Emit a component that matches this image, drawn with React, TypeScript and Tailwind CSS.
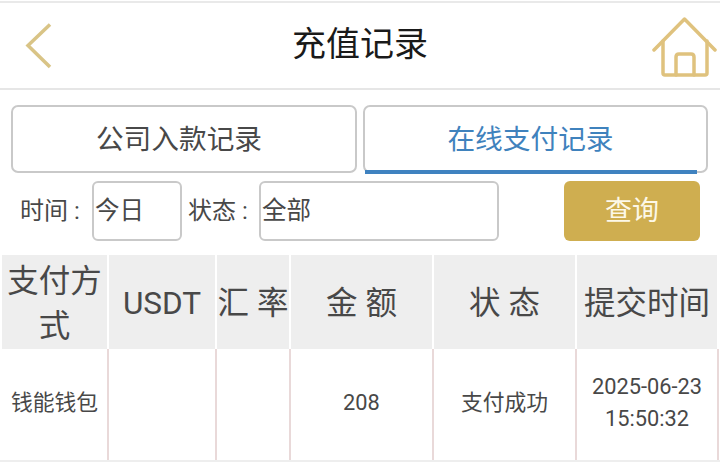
import React from "react";

const font = { fontFamily: '"Roboto", "Noto Sans CJK SC", sans-serif' };

const columns = [
  { title: "支付方式", cell: "钱能钱包" },
  { title: "USDT", cell: "" },
  { title: "汇 率", cell: "" },
  { title: "金 额", cell: "208" },
  { title: "状 态", cell: "支付成功" },
  { title: "提交时间", cell: "2025-06-23 15:50:32" },
];

function BackIcon() {
  return (
    <svg width="30" height="50" viewBox="0 0 30 50" fill="none" stroke="#d9c486" strokeWidth="3.500">
      <path d="M26 3.500 L4 24.500 L26 46" />
    </svg>
  );
}

function HomeIcon() {
  return (
    <svg className="mt-[3px]" width="66" height="60" viewBox="0 0 66 60" fill="none" stroke="#dfc27e" strokeWidth="3.500" strokeLinejoin="round" strokeLinecap="round">
      <path d="M2 33 L32.500 2 L63 33" />
      <path d="M11 24 V56 Q11 58 13 58 H53 Q55 58 55 56 V24" />
      <path d="M24 58 V40 Q24 37 27 37 H39 Q42 37 42 40 V58" />
    </svg>
  );
}

export default function App() {
  return (
    <div className="w-[720px] h-[463px] overflow-hidden bg-white pt-[1px]" style={font}>
      <div className="h-[2px] bg-[#e9e9e9]" />
      {/* Header */}
      <div className="h-[87px] border-b-2 border-[#e6e6e6] flex items-center justify-between pl-[24px] pr-[2px]">
        <BackIcon />
        <h1 className="text-[34px] text-[#1a1a1a] font-normal ml-[14px] mb-[2px]">充值记录</h1>
        <HomeIcon />
      </div>
      {/* Tabs */}
      <div className="flex gap-[6px] pl-[11px] pr-[12px] mt-[15px]">
        <button className="w-[346px] h-[68px] pr-[10px] pt-[2px] border-2 border-[#c9c9c9] rounded-[7px] text-[27.700px] text-[#484848]">
          公司入款记录
        </button>
        <button className="relative w-[345px] h-[68px] pr-[10px] pt-[2px] border-2 border-[#c9c9c9] rounded-[7px] text-[27.700px] text-[#3f82bd]">
          在线支付记录
          <span className="absolute left-0 bottom-[-3px] w-[332px] h-[4px] bg-[#3f82c0]" />
        </button>
      </div>
      {/* Filter */}
      <div className="flex items-center mt-[8px] h-[60px] pl-[20px]">
        <span className="w-[72px] text-[24px] text-[#484848] whitespace-nowrap">时间 :</span>
        <div className="w-[90px] h-[60px] border-2 border-[#c9c9c9] rounded-[6px] flex items-center pl-[1px] text-[24.500px] text-[#484848]">
          今日
        </div>
        <span className="w-[71px] ml-[6px] text-[24px] text-[#484848] whitespace-nowrap">状态 :</span>
        <div className="w-[240px] h-[60px] border-2 border-[#c9c9c9] rounded-[6px] flex items-center pl-[1px] text-[24.500px] text-[#484848]">
          全部
        </div>
        <button className="w-[136px] h-[60px] ml-[65px] rounded-[6px] bg-[#cfae50] text-[27px] text-[#fdf8e8]">
          查询
        </button>
      </div>
      {/* Table */}
      <div className="grid grid-cols-[107px_108px_74px_143px_143px_142px] mt-[14px] pl-[2px]">
        {columns.map((c) => (
          <div
            key={c.title}
            className="h-[94px] mr-[2px] pt-[3px] bg-[#eeeeee] flex items-center justify-center text-center text-[31.500px] leading-[45px] text-[#484848] whitespace-pre-wrap"
          >
            {c.title === "支付方式" ? (
              <span className="w-[96px]">{c.title}</span>
            ) : (
              <span className="whitespace-nowrap">{c.title}</span>
            )}
          </div>
        ))}
        {columns.map((c) => (
          <div
            key={c.title}
            className="h-[111px] pb-[3px] px-[6px] border-r-2 border-[#e9d9d9] flex items-center justify-center text-center text-[21.800px] leading-[32px] text-[#484848]"
          >
            {c.cell}
          </div>
        ))}
      </div>
      <div className="h-[2px] bg-[#eeeeee]" />
    </div>
  );
}
